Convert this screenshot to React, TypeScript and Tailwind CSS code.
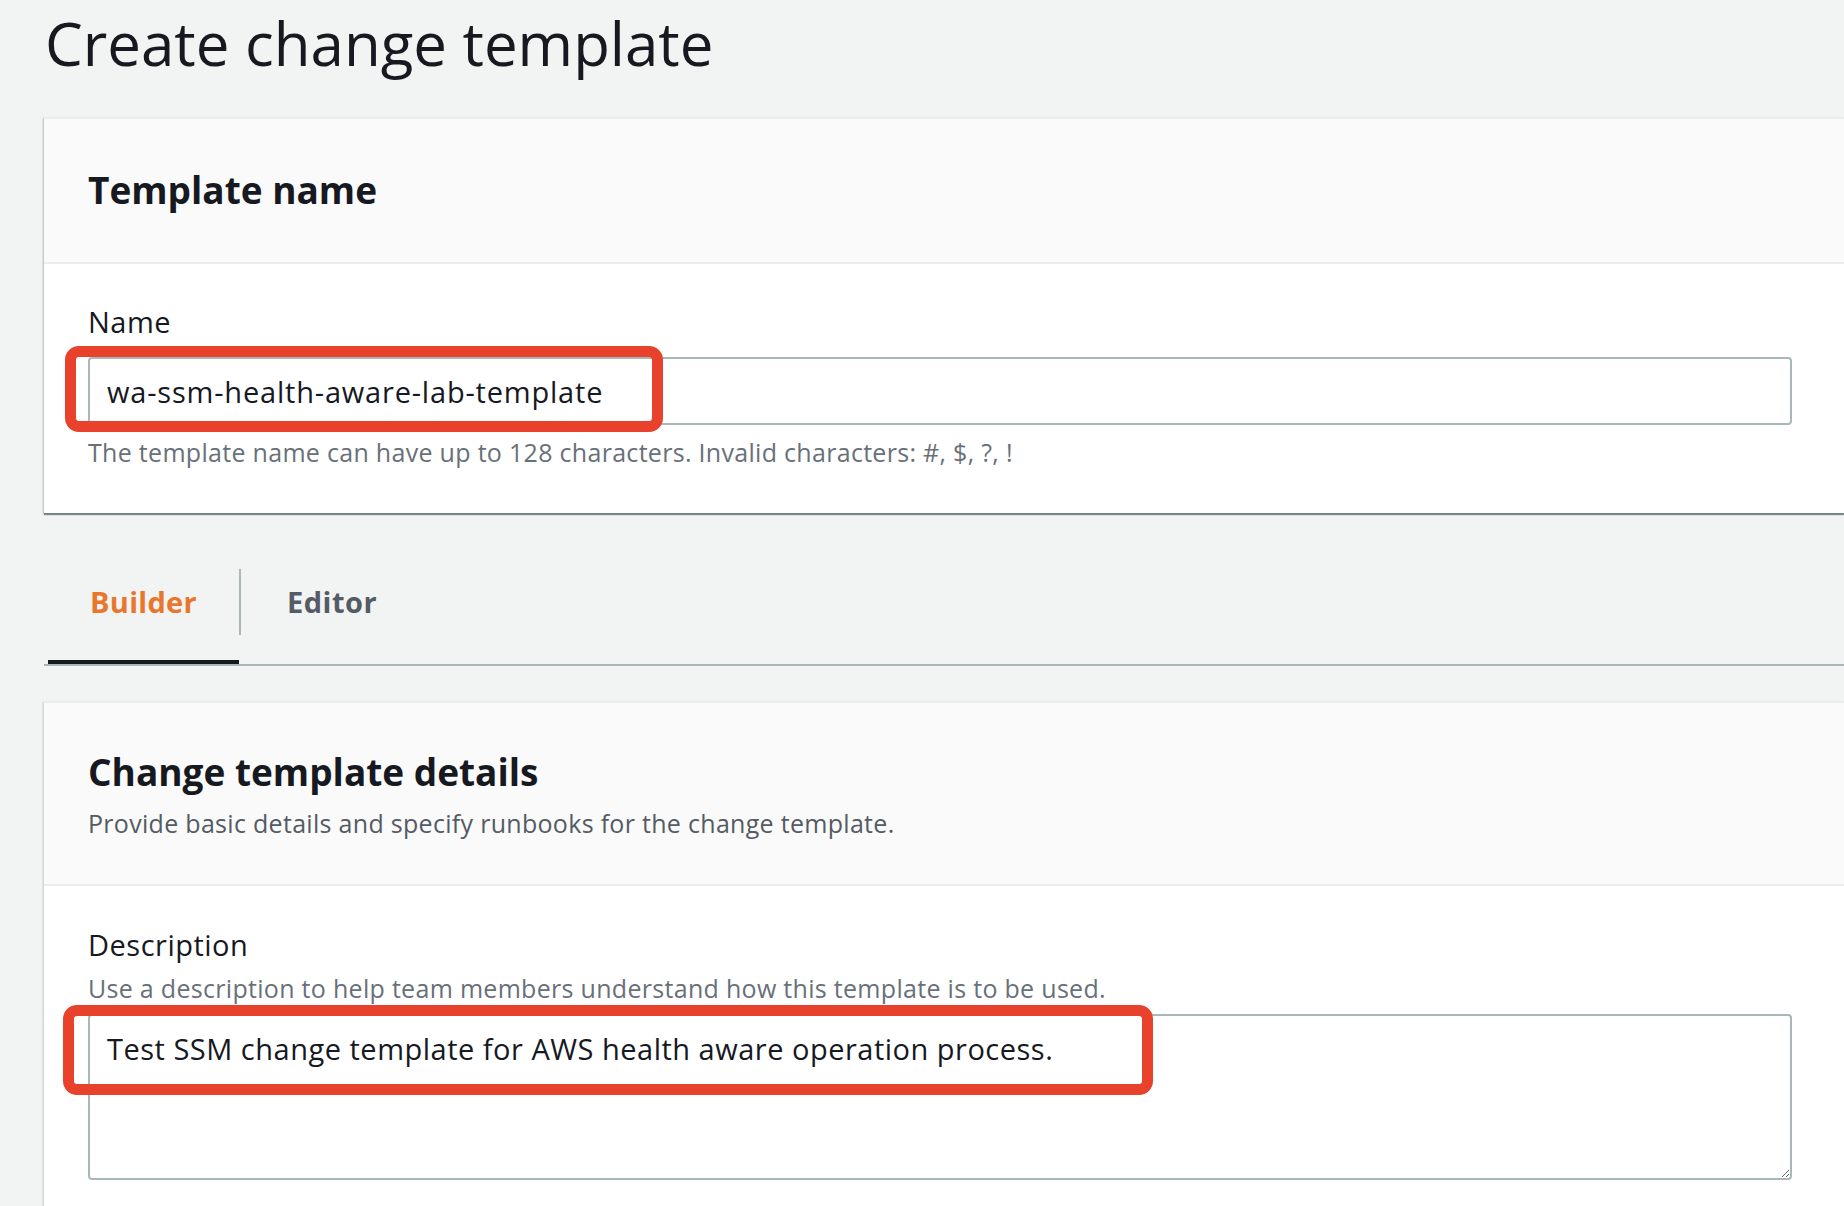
import React from "react";

// Highlight drawn over the screenshot to point at a field
const Callout = ({ className }: { className: string }) => (
  <div className={`pointer-events-none absolute rounded-[14px] border-[11px] border-[#e8412c] ${className}`} />
);

const App = () => {
  return (
    <div className="min-h-screen overflow-hidden bg-[#f2f3f3] pl-[44px] font-['Open_Sans',sans-serif] text-[#16191f]">
      <h1 className="ml-[1px] h-[117px] pt-[3px] text-[60px] font-normal leading-[80px]">Create change template</h1>

      {/* Template name */}
      <div className="border-t-2 border-[#eaeded] bg-white shadow-[0_2px_1px_0_rgba(0,28,36,0.45),-1px_1px_2px_0_rgba(0,28,36,0.2)]">
        <div className="border-b-2 border-[#eaeded] bg-[#fafafa] pb-[47px] pl-[44px] pt-[46px]">
          <h2 className="text-[37px] font-bold leading-[50px]">Template name</h2>
        </div>
        <div className="pb-[44px] pl-[44px] pr-[52px] pt-[38px]">
          <label className="block text-[29px] leading-[40px] tracking-[0.5px]">Name</label>
          <div className="relative mt-[15px]">
            <input
              defaultValue="wa-ssm-health-aware-lab-template"
              className="h-[68px] w-full rounded-[4px] border-2 border-[#aab7b8] bg-white px-[17px] text-[29px] tracking-[0.8px] text-[#16191f] outline-none"
            />
            <Callout className="left-[-23px] top-[-11px] h-[86px] w-[598px]" />
          </div>
          <p className="mt-[10px] text-[25px] leading-[34px] tracking-[0.3px] text-[#687078]">
            The template name can have up to 128 characters. Invalid characters: #, $, ?, !
          </p>
        </div>
      </div>

      {/* Tabs */}
      <div className="mt-[36px] flex border-b-2 border-[#aab7b8]">
        <button className="ml-[4px] w-[191px] border-b-4 border-[#16191f] pb-[38px] pl-[42px] pt-[33px] text-left text-[29px] font-bold leading-[40px] tracking-[0.3px] text-[#e8772e]">
          Builder
        </button>
        <div className="mt-[20px] h-[66px] w-[2px] bg-[#aab7b8]" />
        <button className="border-b-4 border-transparent pb-[38px] pl-[46px] pr-[44px] pt-[33px] text-left text-[29px] font-bold leading-[40px] tracking-[0.5px] text-[#545b64]">
          Editor
        </button>
      </div>

      {/* Change template details */}
      <div className="mt-[35px] border-t-2 border-[#eaeded] bg-white shadow-[-1px_1px_2px_0_rgba(0,28,36,0.2)]">
        <div className="border-b-2 border-[#eaeded] bg-[#fafafa] pb-[44px] pl-[44px] pt-[44px]">
          <h2 className="text-[37px] font-bold leading-[50px]">Change template details</h2>
          <p className="mt-[9px] text-[25px] leading-[34px] tracking-[0.3px] text-[#545b64]">
            Provide basic details and specify runbooks for the change template.
          </p>
        </div>
        <div className="pb-[44px] pl-[44px] pr-[52px] pt-[39px]">
          <label className="block text-[29px] leading-[40px] tracking-[0.5px]">Description</label>
          <p className="mt-[6px] text-[25px] leading-[34px] tracking-[0.3px] text-[#687078]">
            Use a description to help team members understand how this template is to be used.
          </p>
          <div className="relative mt-[9px]">
            <textarea
              defaultValue="Test SSM change template for AWS health aware operation process."
              className="block h-[166px] w-full rounded-[4px] border-2 border-[#aab7b8] bg-white px-[17px] pt-[13px] text-[29px] leading-[40px] tracking-[0.5px] text-[#16191f] outline-none"
            />
            <Callout className="left-[-25px] top-[-9px] h-[90px] w-[1090px]" />
          </div>
        </div>
      </div>
    </div>
  );
};

export default App;
